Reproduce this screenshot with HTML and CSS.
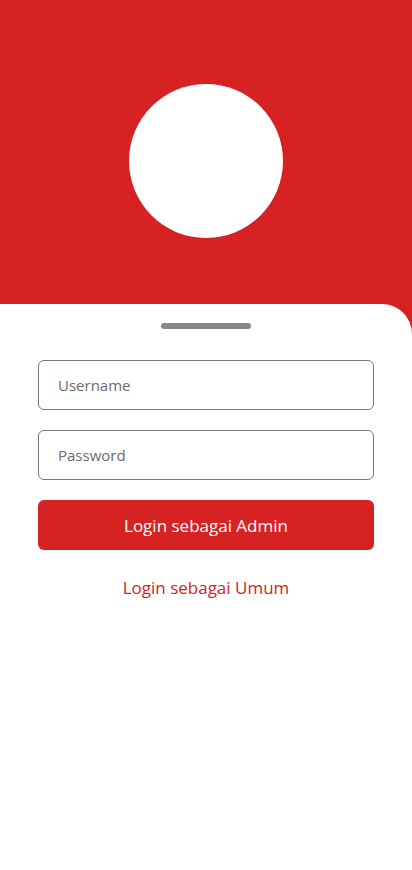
FILE: index.html
```html
<!DOCTYPE html>
<html lang="id">
<head>
<meta charset="utf-8">
<meta name="viewport" content="width=device-width, initial-scale=1">
<title>Login</title>
<link rel="stylesheet" href="styles.css">
</head>
<body>
<div class="page">
  <header class="hero">
    <div class="logo"></div>
  </header>
  <main class="sheet">
    <div class="handle"></div>
    <form class="form">
      <input class="field" type="text" placeholder="Username">
      <input class="field" type="password" placeholder="Password">
      <button class="btn" type="button">Login sebagai Admin</button>
      <a class="link" href="#">Login sebagai Umum</a>
    </form>
  </main>
</div>
</body>
</html>
```
FILE: styles.css
```css
* { box-sizing: border-box; }
html, body { margin: 0; padding: 0; }
body {
  background: #d62222;
  font-family: "Open Sans", "Noto Sans", sans-serif;
  height: 870px;
  overflow: hidden;
}
.page {
  display: flex;
  flex-direction: column;
  height: 870px;
}
.hero {
  height: 304px;
  display: flex;
  justify-content: center;
  padding-top: 84px;
}
.logo {
  width: 154px;
  height: 154px;
  border-radius: 50%;
  background: #fff;
}
.sheet {
  flex: 1;
  background: #fff;
  border-top-right-radius: 30px;
  display: flex;
  flex-direction: column;
  align-items: center;
  padding-top: 19px;
}
.handle {
  width: 90px;
  height: 6px;
  border-radius: 3px;
  background: #888;
}
.form {
  width: 336px;
  margin-top: 31px;
  display: flex;
  flex-direction: column;
}
.field {
  height: 50px;
  border: 1px solid #7a7a7a;
  border-radius: 6px;
  padding: 0 19px;
  font-family: inherit;
  font-size: 15px;
  color: #333;
  margin-bottom: 20px;
  outline: none;
}
.field::placeholder { color: #6b6b6b; }
.btn {
  height: 50px;
  border: none;
  border-radius: 6px;
  background: #d62222;
  color: #fff;
  font-family: inherit;
  font-size: 17px;
  margin-bottom: 24px;
}
.link {
  align-self: center;
  color: #d62222;
  text-decoration: none;
  font-size: 17px;
  line-height: 28px;
}
```
